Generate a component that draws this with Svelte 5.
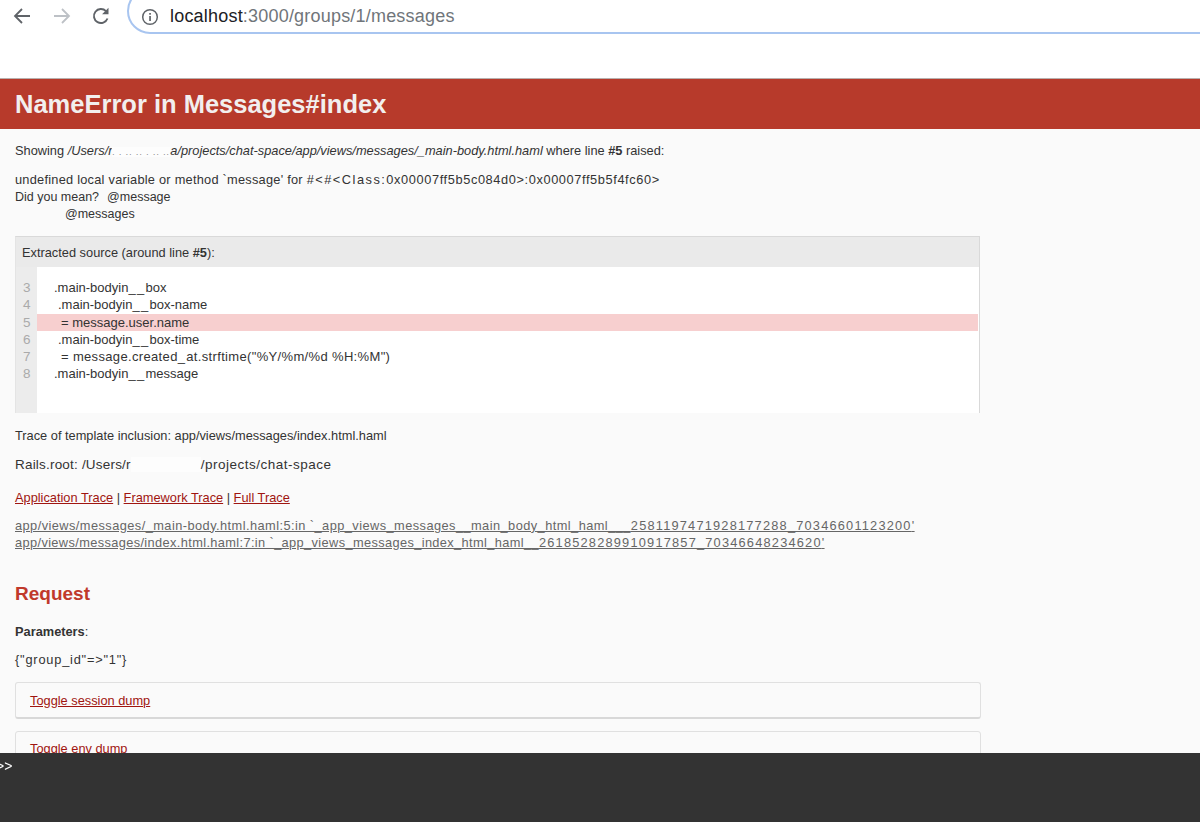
<script>
  const lines = [
    { n: 3, code: '.main-bodyin__box', indent: 'i0' },
    { n: 4, code: '.main-bodyin__box-name', indent: 'i1' },
    { n: 5, code: '= message.user.name', indent: 'i2', hit: true },
    { n: 6, code: '.main-bodyin__box-time', indent: 'i1' },
    { n: 7, code: '= message.created_at.strftime("%Y/%m/%d %H:%M")', indent: 'i2 long' },
    { n: 8, code: '.main-bodyin__message', indent: 'i0' }
  ];
  const traces = [
    "app/views/messages/_main-body.html.haml:5:in `_app_views_messages__main_body_html_haml___2581197471928177288_70346601123200'",
    "app/views/messages/index.html.haml:7:in `_app_views_messages_index_html_haml__2618528289910917857_70346648234620'"
  ];
  const parts = (text, re) => text.split(re).filter(Boolean);
  const under = /(_+)/;
  const digits = /(\d[\d_]{8,})/;
</script>

<div class="page">
  <div class="toolbar">
    <div class="navs">
      <svg width="20" height="20" viewBox="0 0 20 20" class="nav"><path d="M18 10H3.500M10 3 3 10l7 7" fill="none" stroke="#5f6368" stroke-width="1.800"/></svg>
      <svg width="20" height="20" viewBox="0 0 20 20" class="nav"><path d="M2 10h14.500M10 3l7 7-7 7" fill="none" stroke="#bdc1c6" stroke-width="1.800"/></svg>
      <svg width="20" height="20" viewBox="0 0 20 20" class="nav"><path d="M16.500 12.500A7 7 0 1 1 15 5.200" fill="none" stroke="#5f6368" stroke-width="1.900"/><path d="M17.500 1.800v6.400h-6.400z" fill="#5f6368"/></svg>
    </div>
    <div class="urlbar">
      <svg width="18" height="18" viewBox="0 0 18 18" class="info"><circle cx="9" cy="9" r="7.300" fill="none" stroke="#5f6368" stroke-width="1.500"/><rect x="8.200" y="8" width="1.700" height="5" fill="#5f6368"/><rect x="8.200" y="5" width="1.700" height="1.700" fill="#5f6368"/></svg>
      <span class="url"><span class="host">localhost</span>:3000/groups/1/messages</span>
    </div>
  </div>

  <header class="err"><h1>NameError in Messages#index</h1></header>

  <main class="content">
    <p class="showing">Showing <i>/Users/r<span class="mask m1">. . .. .. . .. ..</span>a/projects/chat-space/app/views/messages/_main-body.html.haml</i> where line <b>#5</b> raised:</p>
    <div class="msg">
      <div class="msg-first">undefined local variable or method `message' for <span class="sym">#&lt;#&lt;Class:</span><span class="hex">0x00007ff5b5c084d0&gt;:0x00007ff5b5f4fc60&gt;</span></div>
      <div class="mean">Did you mean?<span class="at">@message</span></div>
      <div class="mean second">@messages</div>
    </div>

    <section class="source">
      <div class="src-head">Extracted source (around line <b>#5</b>):</div>
      <div class="src-body">
        <div class="gutter">
          {#each lines as l}<div class="ln">{l.n}</div>{/each}
        </div>
        <div class="code">
          {#each lines as l}<div class="cl {l.indent}" class:hit={l.hit}>{#each parts(l.code, under) as p}<span class:us={p.startsWith('_')}>{p}</span>{/each}</div>{/each}
        </div>
      </div>
    </section>

    <p class="trace-inc">Trace of template inclusion: app/views/messages/index.html.haml</p>
    <p class="root"><span class="root-a">Rails.root: /Users/r</span><span class="mask m2"></span><span class="root-b">/projects/chat-space</span></p>
    <p class="links"><a href="#a">Application Trace</a> | <a href="#b">Framework Trace</a> | <a href="#c">Full Trace</a></p>
    <div class="trace">
      {#each traces as tr, i}
        <div class:t1={i === 0}><a href="#d">{#each parts(tr, digits) as p}<span class:dg={/^\d{9}/.test(p)}>{p}</span>{/each}</a></div>
      {/each}
    </div>

    <h2>Request</h2>
    <p class="params"><b>Parameters</b>:</p>
    <p class="pval">{"{"}"group_id"=&gt;"1"{"}"}</p>
    <div class="dump first"><a href="#f">Toggle session dump</a></div>
    <div class="dump"><a href="#g">Toggle env dump</a></div>
  </main>

  <div class="console"><span class="prompt">&gt;&gt;</span></div>
</div>

<style>
  :global(body) { margin: 0; background: #fafafa; }
  .page {
    height: 822px;
    overflow: hidden;
    font-family: "Liberation Sans", Arial, sans-serif;
    font-size: 12.800px;
    line-height: 17.250px;
    color: #333;
    background: #fafafa;
  }
  .toolbar {
    height: 78px;
    background: #fff;
    display: flex;
    align-items: flex-start;
    box-sizing: border-box;
    padding-left: 12px;
    overflow: hidden;
  }
  .navs { display: flex; gap: 19.500px; margin-top: 6px; }
  .nav { display: block; }
  .urlbar {
    margin-left: 16px;
    margin-top: -12px;
    height: 46px;
    flex: 1;
    margin-right: -40px;
    border: 2.500px solid #a8c5f0;
    border-radius: 23px;
    display: flex;
    align-items: center;
    box-sizing: border-box;
    padding: 12px 0 0 12px;
  }
  .info { margin-right: 11px; flex: none; }
  .url { font-size: 18px; color: #70757a; letter-spacing: 0.200px; }
  .host { color: #202124; }
  .err {
    background: #b73a2b;
    height: 51px;
    border-top: 1px solid #b9b0ae;
    box-sizing: border-box;
    display: flex;
    align-items: center;
    padding-left: 15px;
  }
  h1 { margin: 0; font-size: 25.500px; line-height: 30px; color: #f2efee; font-weight: 700; }
  .content { padding: 0 15px; width: 966px; }
  p { margin: 0; }
  .showing { margin-top: 13px; }
  .mask { background: #fdfdfd; color: #8a8a8a; }
  .m1 { font-size: 9px; letter-spacing: 0.900px; white-space: pre; }
  .m2 { display: inline-block; width: 70px; height: 15px; vertical-align: -3px; }
  .msg { margin-top: 10px; }
  .msg-first { letter-spacing: 0.240px; }
  .sym { letter-spacing: 1.500px; }
  .hex { letter-spacing: 0.600px; }
  .mean { font-size: 12.500px; }
  .at { margin-left: 8px; }
  .second { padding-left: 50px; }
  .source {
    margin-top: 13px;
    border: 1px solid #d9d9d9;
    border-bottom: none;
    border-left-color: #e4e4e4;
    width: 965px;
    box-sizing: border-box;
  }
  .src-head { height: 30px; background: #eaeaea; padding-left: 6px; line-height: 31px; }
  .src-body { display: flex; height: 146px; background: #fff; }
  .gutter {
    width: 21px;
    background: #ececec;
    color: #aaa;
    font-size: 13.500px;
    padding-top: 12px;
    box-sizing: border-box;
    padding-left: 7px;
    flex: none;
  }
  .ln { height: 17.250px; }
  .code { flex: 1; padding-top: 12px; margin-right: 1px; font-size: 13px; }
  .cl { height: 17.250px; color: #333; }
  .us { letter-spacing: 1.300px; }
  .i0 { padding-left: 17px; }
  .i1 { padding-left: 21px; }
  .i2 { padding-left: 24px; }
  .long { letter-spacing: 0.340px; }
  .hit { background: #f7cfcf; }
  .trace-inc { margin-top: 14px; }
  .root { margin-top: 12px; font-size: 13.500px; }
  .root-a { letter-spacing: 0.200px; }
  .root-b { letter-spacing: 0.500px; }
  .links { margin-top: 15px; }
  a { color: #a01510; text-decoration: underline; }
  .trace { margin-top: 11px; letter-spacing: 0.370px; }
  .t1 { letter-spacing: 0.440px; }
  .trace a { color: #666; }
  .dg { letter-spacing: 1.200px; }
  h2 { margin: 30px 0 0; font-size: 19px; line-height: 26px; color: #c0392b; font-weight: 700; }
  .params { margin-top: 16px; }
  .pval { margin-top: 10px; letter-spacing: 0.800px; }
  .dump {
    height: 37px;
    box-sizing: border-box;
    border: 1px solid #e0e0e0;
    border-bottom: 2px solid #d8d8d8;
    border-radius: 3px;
    padding-left: 14px;
    line-height: 36px;
    width: 966px;
    margin-top: 14px;
  }
  .dump + .dump { margin-top: 12px; border-bottom: 1px solid #e0e0e0; line-height: 34px; }
  .console {
    position: fixed;
    left: 0; right: 0; bottom: 0;
    height: 69px;
    background: #333;
    color: #fff;
    font-size: 14px;
    line-height: 26px;
  }
  .prompt { margin-left: -4px; }
</style>
